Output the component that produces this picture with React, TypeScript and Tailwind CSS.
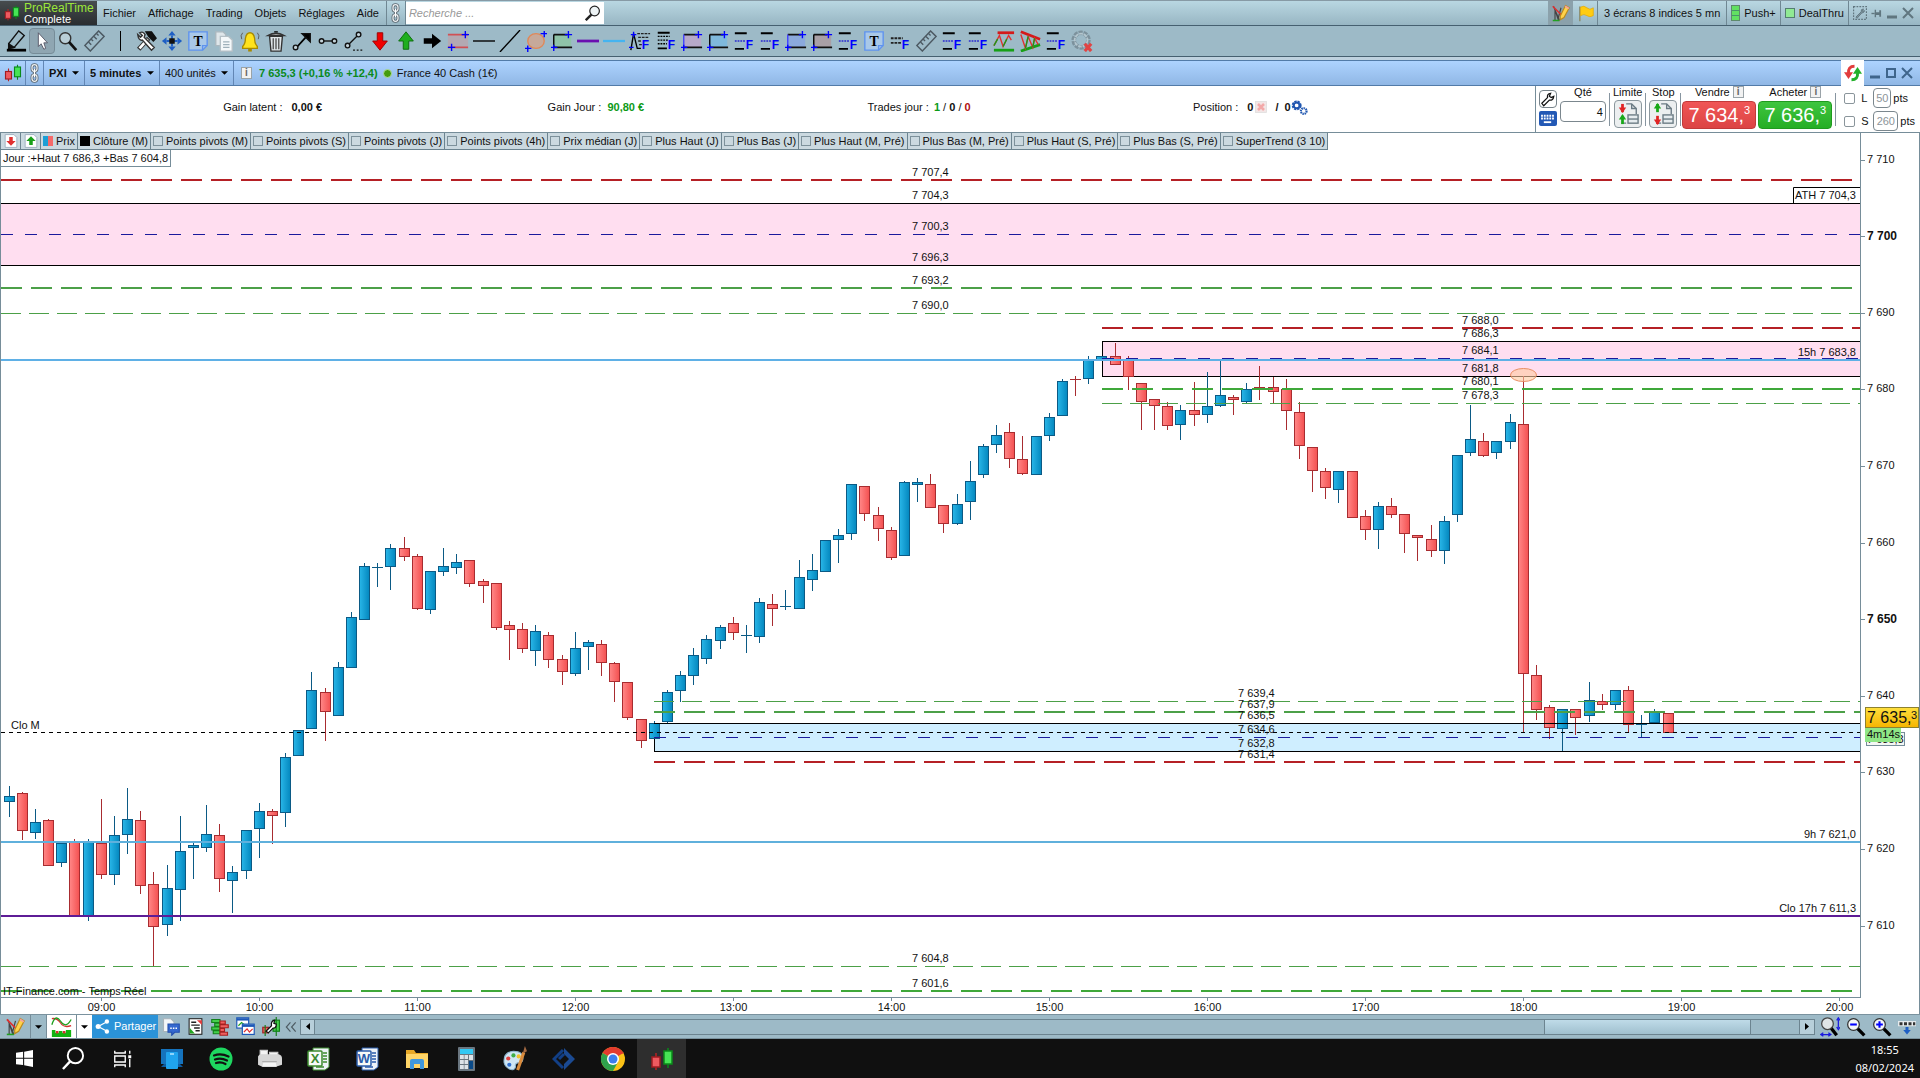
import type { ReactNode } from "react";

// y positions on the price scale: [up, high, body top, body bottom, low]
const candles: [number, number, number, number, number][] = [
  [1, 786, 796, 802, 817], [0, 792, 793, 831, 840], [1, 809, 822, 833, 839], [0, 819, 820, 866, 866],
  [1, 842, 843, 863, 867], [0, 839, 842, 916, 916], [1, 839, 842, 916, 921], [0, 799, 843, 875, 879],
  [1, 816, 835, 875, 885], [1, 788, 819, 835, 854], [0, 811, 820, 886, 894], [0, 872, 884, 927, 966],
  [1, 865, 888, 925, 936], [1, 816, 851, 890, 921], [1, 843, 845, 848, 879], [1, 805, 834, 848, 852],
  [0, 824, 835, 879, 892], [1, 866, 872, 881, 913], [1, 830, 830, 871, 879], [1, 803, 811, 829, 858],
  [0, 809, 811, 816, 844], [1, 753, 757, 813, 827], [1, 730, 730, 756, 756], [1, 672, 690, 729, 729],
  [0, 688, 692, 712, 741], [1, 662, 667, 716, 716], [1, 612, 617, 668, 668], [1, 563, 566, 620, 620],
  [1, 563, 567, 568, 587], [1, 544, 548, 567, 590], [0, 537, 548, 557, 561], [0, 554, 556, 609, 610],
  [1, 571, 571, 610, 614], [1, 548, 566, 572, 576], [1, 554, 562, 568, 574], [0, 560, 560, 584, 587],
  [0, 579, 581, 586, 603], [0, 583, 583, 628, 630], [0, 621, 625, 630, 660], [0, 623, 629, 649, 653],
  [1, 625, 631, 651, 666], [0, 632, 635, 660, 668], [0, 655, 659, 672, 685], [1, 632, 648, 674, 676],
  [1, 640, 642, 647, 670], [0, 640, 644, 663, 676], [0, 662, 663, 682, 702], [0, 682, 682, 718, 720],
  [0, 719, 719, 741, 748], [1, 721, 723, 739, 739], [1, 690, 692, 722, 723], [1, 671, 675, 691, 702],
  [1, 648, 655, 676, 685], [1, 635, 639, 659, 664], [1, 625, 627, 641, 649], [0, 617, 623, 633, 640],
  [1, 625, 635, 636, 653], [1, 598, 602, 637, 643], [0, 594, 604, 609, 626], [1, 590, 606, 607, 610],
  [1, 560, 577, 609, 609], [1, 554, 570, 580, 591], [1, 540, 540, 572, 572], [1, 529, 535, 540, 563],
  [1, 484, 484, 534, 540], [0, 486, 486, 514, 521], [0, 507, 515, 529, 541], [0, 527, 530, 558, 560],
  [1, 481, 482, 556, 556], [1, 478, 482, 485, 502], [0, 474, 484, 508, 508], [0, 505, 505, 524, 533],
  [1, 494, 504, 524, 525], [1, 461, 481, 502, 520], [1, 444, 446, 475, 478], [1, 425, 435, 445, 453],
  [0, 423, 432, 459, 468], [0, 436, 459, 474, 475], [1, 436, 436, 475, 475], [1, 413, 417, 436, 441],
  [1, 379, 381, 416, 416], [0, 376, 379, 380, 396], [1, 356, 360, 379, 384], [1, 356, 356, 360, 360],
  [0, 343, 356, 365, 365], [0, 356, 360, 377, 390], [0, 383, 383, 402, 430], [0, 399, 399, 406, 430],
  [0, 402, 406, 426, 430], [1, 405, 410, 425, 440], [0, 382, 410, 415, 426], [1, 372, 406, 415, 423],
  [1, 360, 395, 406, 407], [0, 395, 397, 400, 415], [1, 383, 389, 402, 403], [0, 366, 387, 388, 400],
  [0, 377, 387, 392, 403], [0, 379, 389, 411, 430], [0, 402, 412, 446, 459], [0, 447, 447, 471, 492],
  [0, 468, 471, 488, 499], [1, 471, 471, 490, 503], [0, 471, 471, 518, 518], [0, 510, 516, 530, 540],
  [1, 502, 506, 530, 549], [0, 498, 506, 515, 518], [0, 514, 514, 534, 553], [0, 535, 535, 538, 561],
  [0, 525, 539, 551, 557], [1, 516, 521, 551, 564], [1, 455, 455, 515, 522], [1, 405, 439, 453, 456],
  [0, 433, 441, 456, 457], [1, 441, 441, 453, 459], [1, 414, 422, 442, 449], [0, 376, 424, 674, 732],
  [0, 665, 675, 710, 720], [0, 705, 707, 728, 739], [1, 709, 709, 729, 751], [0, 709, 709, 718, 735],
  [1, 682, 700, 716, 722], [0, 694, 701, 705, 710], [1, 690, 690, 705, 710], [0, 686, 690, 725, 732],
  [1, 715, 724, 725, 737], [1, 709, 712, 723, 723], [0, 713, 713, 733, 733],
];

const RED = "#b52025";
const GREEN = "#4ca048";
const LIME = "#3fa83a";
const NAVY = "#1a1a9c";

// [x start, y, colour, width, dash]
const levels: [number, number, string, number, string][] = [
  [1, 180, RED, 2, "21 9"],
  [1, 234, NAVY, 1, "12 12"],
  [1, 288, GREEN, 2, "21 9"],
  [1, 313, GREEN, 1, "20 8"],
  [1102, 328, RED, 2, "21 9"],
  [0, 360, "#5fb0e6", 2, ""],
  [1102, 358, NAVY, 1, "12 12"],
  [1102, 389, LIME, 2, "21 9"],
  [1102, 403, GREEN, 1, "20 8"],
  [654, 701, GREEN, 1, "20 8"],
  [654, 712, GREEN, 2, "21 9"],
  [1, 732, "#000", 1, "4 4"],
  [654, 737, NAVY, 1, "12 12"],
  [654, 762, RED, 2, "21 9"],
  [0, 842, "#5fb0dc", 2, ""],
  [0, 916, "#5e1c96", 2, ""],
  [1, 966, GREEN, 1, "20 8"],
  [1, 991, LIME, 2, "21 9"],
];

const labels: [number, number, string][] = [
  [912, 176, "7 707,4"], [912, 199, "7 704,3"], [912, 230, "7 700,3"],
  [912, 261, "7 696,3"], [912, 284, "7 693,2"], [912, 309, "7 690,0"],
  [1462, 324, "7 688,0"], [1462, 337, "7 686,3"], [1462, 354, "7 684,1"],
  [1462, 372, "7 681,8"], [1462, 385, "7 680,1"], [1462, 399, "7 678,3"],
  [1238, 697, "7 639,4"], [1238, 708, "7 637,9"], [1238, 719, "7 636,5"],
  [1238, 733, "7 634,6"], [1238, 747, "7 632,8"], [1238, 758, "7 631,4"],
  [912, 962, "7 604,8"], [912, 987, "7 601,6"], [11, 729, "Clo M"],
];

const prices = ["7 710", "7 700", "7 690", "7 680", "7 670", "7 660", "7 650", "7 640", "7 630", "7 620", "7 610"];
const hours = ["09", "10", "11", "12", "13", "14", "15", "16", "17", "18", "19", "20"];

function Zone({ x, top, bottom, fill }: { x: number; top: number; bottom: number; fill: string }) {
  return (
    <g shapeRendering="crispEdges">
      <rect x={x} y={top} width={1870 - x} height={bottom - top + 1} fill="#000" />
      <rect x={x + 1} y={top + 1} width={1870 - x} height={bottom - top - 1} fill={fill} />
    </g>
  );
}

function Chart() {
  return (
    <svg viewBox="0 133 1920 881" className="block h-auto w-full" fontSize="11" fill="#111">
      <defs>
        <linearGradient id="up">
          <stop offset="0" stopColor="#27b4e6" />
          <stop offset="1" stopColor="#0589c0" />
        </linearGradient>
        <linearGradient id="down">
          <stop offset="0" stopColor="#ff8585" />
          <stop offset="1" stopColor="#f45353" />
        </linearGradient>
        <linearGradient id="gold" x2="0" y2="1">
          <stop offset="0" stopColor="#ffe03e" />
          <stop offset="1" stopColor="#f5b400" />
        </linearGradient>
        <clipPath id="plot">
          <rect x="0" y="133" width="1860" height="864" />
        </clipPath>
      </defs>
      <g clipPath="url(#plot)">
        <Zone x={-5} top={203} bottom={265} fill="#ffdef0" />
        <Zone x={1102} top={341} bottom={376} fill="#ffdef0" />
        <Zone x={654} top={723} bottom={751} fill="#cfeeff" />
        {candles.map(([up, high, top, bottom, low], i) => {
          const x = 9 + Math.floor((79 * i) / 6);
          const edge = up ? "#0b5a85" : "#a82c30";
          return (
            <g key={i} shapeRendering="crispEdges">
              <rect x={x} y={high} width="1" height={low - high} fill={edge} />
              <rect x={x - 5} y={top} width="11" height={bottom - top} fill={edge} />
              {bottom - top > 2 && (
                <rect x={x - 4} y={top + 1} width="9" height={bottom - top - 2} fill={up ? "url(#up)" : "url(#down)"} />
              )}
            </g>
          );
        })}
        {[723, 751].map((y) => (
          <rect key={y} x="654" y={y} width="1206" height="1" fill="#000" />
        ))}
        {levels.map(([x, y, color, width, dash], i) => (
          <line
            key={i}
            x1={x}
            x2="1860"
            y1={width === 1 ? y + 0.5 : y}
            y2={width === 1 ? y + 0.5 : y}
            stroke={color}
            strokeWidth={width}
            strokeDasharray={dash || undefined}
            shapeRendering="crispEdges"
          />
        ))}
        <ellipse cx="1523.5" cy="375" rx="13" ry="6.5" fill="#ffc9a0" fillOpacity=".6" stroke="#e98f63" />
        <path d="M1793.500 203V187.500H1862V203" fill="#fff" stroke="#000" />
      </g>
      {labels.map(([x, y, text]) => (
        <text key={text} x={x} y={y}>{text}</text>
      ))}
      <g textAnchor="end">
        <text x="1856" y="199">ATH 7 704,3</text>
        <text x="1856" y="356">15h 7 683,8</text>
        <text x="1856" y="838">9h 7 621,0</text>
        <text x="1856" y="912">Clo 17h 7 611,3</text>
      </g>
      <text x="3" y="995">IT-Finance.com - Temps Réel</text>

      <path d="M.5 133V1014M1860.500 133V997.500M0 997.500H1861M1919.500 133V1014" fill="none" stroke="#768d99" />
      {prices.map((p, i) => {
        const y = Math.floor(160 + i * 76.6);
        const round = i === 1 || i === 6;
        return (
          <g key={p}>
            <rect x="1861" y={y} width="4" height="1" fill="#768d99" />
            <text x="1867" y={y + (round ? 4 : 3)} fontSize={round ? 12 : 11} fontWeight={round ? 700 : 400}>{p}</text>
          </g>
        );
      })}
      {hours.map((h, i) => (
        <g key={h}>
          <rect x={101 + i * 158} y="998" width="1" height="3" fill="#768d99" />
          <text x={101.5 + i * 158} y="1011" textAnchor="middle">{h}:00</text>
        </g>
      ))}

      <rect x="1866.500" y="732.500" width="38" height="13" fill="#f4f7f4" stroke="#768d99" />
      <text x="1867" y="743">7 635,3</text>
      <rect x="1865" y="728" width="36" height="14" fill="#8fe686" />
      <text x="1867" y="738">4m14s</text>
      <rect x="1865.500" y="707.500" width="53" height="20" fill="url(#gold)" stroke="#8d8130" />
      <text x="1867" y="723" fontSize="16">7 635,</text>
      <text x="1911" y="719">3</text>
    </svg>
  );
}

function Svg({ size = 22, children }: { size?: number; children: ReactNode }) {
  return (
    <svg viewBox="0 0 24 24" width={size} height={size} fill="none" stroke="#111" strokeWidth="1.500" className="shrink-0">
      {children}
    </svg>
  );
}

function Fib({ children }: { children?: ReactNode }) {
  return (
    <Svg>
      {children ?? (
        <>
          <path d="M2 3.500H15M2 20.500H12" stroke="#000" strokeWidth="2" />
          <path d="M2 12H14" stroke="#2a2ad0" strokeDasharray="2 1" />
        </>
      )}
      <text x="14" y="21" fontSize="13" fontWeight="700" fill="#00f" stroke="none">F</text>
    </Svg>
  );
}

function Box({ fill, left = "#000" }: { fill: string; left?: string }) {
  return (
    <Svg>
      <rect x="3" y="5" width="19" height="14" fill={fill} stroke="none" />
      <path d="M3 5H18M3 19H23" stroke="#111" strokeWidth="2" />
      <path d="M3 5V19" stroke={left} />
      <path d="M19 1V9M15 5H23M0 19H7M3 16V23" stroke="#00f" />
    </Svg>
  );
}

function TextTool() {
  return (
    <Svg>
      <path d="M2 2H22V17L17 22H2Z" fill="#a9c8e8" stroke="#5f93ee" />
      <path d="M22 17H17V22" stroke="#5f93ee" />
      <text x="12" y="17" textAnchor="middle" fontSize="15" fontWeight="700" fill="#000" stroke="none" fontFamily="Liberation Serif, serif">T</text>
    </Svg>
  );
}

function Ruler() {
  return (
    <Svg>
      <path d="M2 17L17 1L23 7L8 23Z" stroke="#4c5962" />
      <path d="M6 13L9 16M9 10L11 12M12 7L15 10M15 4L17 6" stroke="#4c5962" />
    </Svg>
  );
}

function DrawChart({ size = 22 }: { size?: number }) {
  return (
    <Svg size={size}>
      <path d="M2 3L10 22M4 22V8L8 20L12 5" stroke="#444" />
      <path d="M1 3L14 16" stroke="#e03030" strokeWidth="2" />
      <path d="M1 22H10" stroke="#22a022" strokeWidth="2" />
      <path d="M11 16L18 2L23 5L16 18L11 21Z" fill="#ffd24a" stroke="#b98a1e" />
      <path d="M18 2L23 5L22 7L17 4Z" fill="#f2a0a0" stroke="none" />
    </Svg>
  );
}

function Candles({ size = 22 }: { size?: number }) {
  return (
    <Svg size={size}>
      <path d="M6 6V23" stroke="#b22" />
      <rect x="2" y="10" width="8" height="10" fill="#ee5a60" stroke="#a01c22" />
      <path d="M18 1V21" stroke="#0a8a1a" />
      <rect x="14" y="4" width="8" height="13" fill="#47e455" stroke="#0a8a1a" />
    </Svg>
  );
}

function Chain() {
  return (
    <svg viewBox="0 0 12 24" width="11" height="20" fill="none" stroke="#5b6770" strokeWidth="3.500">
      <rect x="3" y="2" width="6" height="8" rx="3" />
      <rect x="3" y="14" width="6" height="8" rx="3" />
      <path d="M6 7V17" />
      <rect x="3" y="2" width="6" height="8" rx="3" stroke="#eef1f3" strokeWidth="1.500" />
      <rect x="3" y="14" width="6" height="8" rx="3" stroke="#eef1f3" strokeWidth="1.500" />
      <path d="M6 7V17" stroke="#fff" strokeWidth="1.500" />
    </svg>
  );
}

function Lens({ sign }: { sign: string }) {
  return (
    <Svg size={20}>
      <path d="M14 14L22 22" stroke="#000" strokeWidth="4" />
      <circle cx="9" cy="9" r="7" fill="#f3f6f7" stroke="#333" />
      <path d={sign} stroke="#00f" strokeWidth="2.500" />
    </Svg>
  );
}

const tools: [string, ReactNode][] = [
  ["Crayon", <Svg><path d="M4 15L15 1L21 6L10 19L4 20Z" /><path d="M4 15L10 19L4 20Z" fill="#111" /><path d="M2 22H23" stroke="#000" strokeWidth="3" /></Svg>],
  ["Sélection", <Svg><path d="M8 3V18L11 15L14 21L16 20L14 14H18Z" fill="#fff" stroke="#556" strokeWidth="1" /></Svg>],
  ["Loupe", <Svg><circle cx="9" cy="9" r="6" fill="#b9ced7" stroke="#333" /><path d="M13 13L21 22" stroke="#111" strokeWidth="3" /></Svg>],
  ["Règle", <Ruler />],
  ["", null],
  ["Outils", <Svg><path d="M4 21L15 9" stroke="#333" strokeWidth="5" /><path d="M5 20L14 10" stroke="#fff" strokeWidth="3" /><path d="M3 5L6 8L8 6L5 3Q9 1 11 5L10 8L21 19L18 22L8 11Q4 12 3 5Z" fill="#fff" stroke="#333" /><path d="M12 2L18 2L23 9L20 12L15 7Z" fill="#111" /></Svg>],
  ["Déplacer", <Svg><path d="M12 1L16 6H8ZM12 23L8 18H16ZM1 12L6 8V16ZM23 12L18 16V8Z" fill="#1f5fc4" stroke="none" /><path d="M12 6V18M6 12H18" stroke="#1f5fc4" strokeWidth="2" /><path d="M9 9H15V15H9Z" fill="#111" stroke="none" /></Svg>],
  ["Texte", <TextTool />],
  ["Copier", <Svg><path d="M3 2H11L14 5V17H3Z" fill="#dfe6ea" stroke="#aab7be" /><path d="M8 7H17L21 11V23H8Z" fill="#f5f8fa" stroke="#b5c0c6" /><path d="M11 13H18M11 16H18M11 19H18" stroke="#9fb0ba" /></Svg>],
  ["Alerte", <Svg><path d="M4 18Q7 15 7 9Q8 3 12 3Q16 3 17 9Q17 15 20 18V20H4Z" fill="#ffe21c" stroke="#a88a00" /><path d="M10 22H14" stroke="#a88a00" strokeWidth="3" /><path d="M4 3Q1 6 3 10M20 3Q23 6 21 10" stroke="#555" strokeWidth="1" /></Svg>],
  ["Supprimer", <Svg><path d="M5 7H19L17.500 23H6.500Z" fill="#dfe5e8" stroke="#333" /><path d="M9 9V21M12 9V21M15 9V21" stroke="#555" /><path d="M3 6Q12 1 21 6Z" fill="#ccc" stroke="#333" /><path d="M10 2H14" /></Svg>],
  ["Flèche", <Svg><path d="M7 18L17 7" stroke="#000" strokeWidth="2" /><path d="M12 4H21V13Z" fill="#000" /><circle cx="5" cy="19" r="2.500" fill="#c3d3da" /></Svg>],
  ["Segment", <Svg><path d="M6 12H18" /><circle cx="5" cy="12" r="2.500" fill="#c3d3da" /><circle cx="19" cy="12" r="2.500" fill="#c3d3da" /></Svg>],
  ["Segments", <Svg><path d="M5 17L17 5" /><circle cx="5" cy="17" r="2.500" fill="#c3d3da" /><circle cx="17" cy="5" r="2.500" fill="#c3d3da" /><path d="M11 22H22" strokeDasharray="2 2" /></Svg>],
  ["Baisse", <Svg><path d="M9 3H15V12H20L12 22L4 12H9Z" fill="#f00000" stroke="#900" strokeWidth="1" /></Svg>],
  ["Hausse", <Svg><path d="M9 21H15V12H20L12 2L4 12H9Z" fill="#1fae1f" stroke="#0a6a0a" strokeWidth="1" /></Svg>],
  ["Droite", <Svg><path d="M3 9H12V4L22 12L12 20V15H3Z" fill="#000" stroke="none" /></Svg>],
  ["Canal", <Svg><path d="M1 5H23V19H1Z" fill="#b3a9b2" stroke="none" /><path d="M1 5H23M1 19H23" stroke="#d05055" strokeWidth="2" /><path d="M20 1V9M16 5H24M5 15V23M1 19H9" stroke="#00f" /></Svg>],
  ["Horizontale", <Svg><path d="M0 12H24" stroke="#000" /></Svg>],
  ["Oblique", <Svg><path d="M1 24L23 0" stroke="#000" /></Svg>],
  ["Ellipse", <Svg><ellipse cx="12" cy="12" rx="9" ry="8" fill="#c6a99a" stroke="#e08858" /><path d="M21 1V8M17 4H24M3 17V24M0 20H7" stroke="#00f" /></Svg>],
  ["Zone verte", <Box fill="#8fc3a8" />],
  ["Ligne violette", <Svg><path d="M0 12H24" stroke="#6a10b0" strokeWidth="3" /></Svg>],
  ["Ligne bleue", <Svg><path d="M0 12H24" stroke="#45b4f0" strokeWidth="2.500" /></Svg>],
  ["Fibonacci A", <Fib><path d="M2 22L5 4L9 20H13" stroke="#000" /><path d="M2 5H8M5 2V8M0 19H5" stroke="#00f" /><path d="M9 4H23M10 8H21M10 12H14M11 16H14" stroke="#222" strokeDasharray="3 1" /></Fib>],
  ["Fibonacci B", <Fib><path d="M3 3H16M3 20H13" stroke="#000" strokeWidth="2" /><path d="M3 7H16M3 11H14M3 15H13" stroke="#000" strokeDasharray="2 1" /></Fib>],
  ["Zone mauve", <Box fill="#b7a9c9" left="#4040ff" />],
  ["Zone cyan", <Box fill="#7fb9dc" />],
  ["Niveaux 1", <Fib />],
  ["Niveaux 2", <Fib />],
  ["Zone bleue", <Box fill="#8ba9dc" left="#4040ff" />],
  ["Zone brune", <Box fill="#a9a0a6" />],
  ["Niveaux 3", <Fib />],
  ["Note", <TextTool />],
  ["Niveaux 4", <Fib><path d="M2 9H15M2 14H13" stroke="#222" strokeWidth="2" strokeDasharray="3 1" /></Fib>],
  ["Mesure", <Ruler />],
  ["Niveaux 5", <Fib />],
  ["Niveaux 6", <Fib />],
  ["Supports", <Svg><path d="M5 3H23" stroke="#d41a1a" strokeWidth="3" /><path d="M1 22H23" stroke="#16a016" strokeWidth="3" /><path d="M1 17L7 6L11 18L17 6L20 11" stroke="#e03030" /><path d="M1 17L5 10M11 18L15 10" stroke="#1a9a1a" /></Svg>],
  ["Triangle", <Svg><path d="M2 2L23 10" stroke="#d41a1a" strokeWidth="3" /><path d="M2 23L23 16" stroke="#16a016" strokeWidth="3" /><path d="M2 5L7 20L10 7L15 19L17 9L21 16" stroke="#e03030" /><path d="M7 20L10 7M15 19L17 9" stroke="#1a9a1a" /></Svg>],
  ["Niveaux 7", <Fib />],
  ["Aimant", <Svg><circle cx="11" cy="11" r="8" stroke="#7c919c" strokeWidth="5" strokeDasharray="4 1" /><circle cx="11" cy="11" r="7" stroke="#b4c6ce" strokeWidth="2" strokeDasharray="4 1" /><path d="M15 15L22 23M22 15L15 23" stroke="#e04444" strokeWidth="3.500" /></Svg>],
];

function WindowIcons({ color, maximize }: { color: string; maximize?: boolean }) {
  return maximize ? (
    <svg viewBox="0 0 44 14" width="44" height="14" fill="none" stroke={color} strokeWidth="2">
      <path d="M0 11H10" strokeWidth="3" />
      <path d="M17 3H25V11H17Z" />
      <path d="M32 2L42 12M42 2L32 12" />
    </svg>
  ) : (
    <svg viewBox="0 0 30 14" width="30" height="14" fill="none" stroke={color} strokeWidth="2">
      <path d="M1 11H11" strokeWidth="3" />
      <path d="M17 2L27 12M27 2L17 12" />
    </svg>
  );
}

function MenuBar() {
  return (
    <header className="flex h-[25px] items-stretch border-t border-t-[#879aa5] bg-linear-to-b from-[#b9d7e2] to-[#98b6c3]">
      <div className="flex w-[97px] items-center gap-1 bg-linear-to-b from-[#474c4e] to-[#292d30] pl-1">
        <Candles size={16} />
        <div>
          <div className="text-xs leading-3 text-[#9be83a]">ProRealTime</div>
          <div className="leading-[11px] text-white">Complete</div>
        </div>
      </div>
      <nav className="flex items-center gap-3 pr-[7px] pl-[6px]">
        {["Fichier", "Affichage", "Trading", "Objets", "Réglages", "Aide"].map((item) => (
          <button key={item} type="button">{item}</button>
        ))}
      </nav>
      <div className="flex w-5 items-center justify-center border-x border-[#6f8793]"><Chain /></div>
      <label className="my-px flex w-[198px] items-center bg-white px-[3px]">
        <input aria-label="Recherche" placeholder="Recherche ..." className="min-w-0 flex-1 italic outline-none placeholder:text-[#999]" />
        <svg viewBox="0 0 20 20" width="16" height="16" fill="none" stroke="#222" strokeWidth="1.500">
          <circle cx="12" cy="7.500" r="6" fill="#eef4f6" />
          <path d="M8 12L1 19" strokeWidth="3" />
        </svg>
      </label>
      <div className="ml-auto flex items-stretch">
        <button type="button" aria-label="Dessin" className="flex w-[25px] items-center justify-center bg-[#8ba1ab]"><DrawChart size={18} /></button>
        <button type="button" aria-label="Drapeau" className="flex w-[25px] items-center justify-center border-r border-[#6f8793]">
          <Svg size={17}><path d="M4 2V23" stroke="#8a8a6a" strokeWidth="2" /><path d="M5 3Q10 0 14 4T23 4V15Q18 18 14 15T5 15Z" fill="#ffcc12" stroke="#e3a800" strokeWidth="1" /></Svg>
        </button>
        <button type="button" className="border-r border-[#6f8793] px-[6px]">3 écrans 8 indices 5 mn</button>
        <button type="button" className="flex items-center gap-1 border-r border-[#6f8793] px-1">
          <span className="h-4 w-[9px] border border-[#5e8a6c] bg-[repeating-linear-gradient(#62e062_0_4px,#47956a_4px_5px)]" />
          Push+
        </button>
        <button type="button" className="flex items-center gap-1 border-r border-[#6f8793] px-1">
          <span className="h-[10px] w-[10px] border border-[#547f70] bg-[#90ea94]" />
          DealThru
        </button>
        <div className="flex items-center gap-1 pr-1 pl-1">
          <Svg size={14}><rect x="1" y="1" width="22" height="22" stroke="#60767f" strokeDasharray="3 2" strokeWidth="2" /><path d="M5 19L14 10Q13 5 18 5L16 9L20 8Q19 12 15 12L7 21Z" fill="#7d949e" stroke="#60767f" /></Svg>
          <Svg size={11}><path d="M1 12H8" stroke="#60767f" strokeWidth="3" /><path d="M8 4H11V9H18V5H22V19H18V15H11V20H8Z" fill="#60767f" stroke="none" /></Svg>
          <WindowIcons color="#60767f" />
        </div>
      </div>
    </header>
  );
}

function ToolBar() {
  return (
    <div className="flex h-8 items-center border-y border-[#466070] bg-[#9dbac7] px-[3px]">
      {tools.map(([name, icon], i) =>
        icon ? (
          <button
            key={name}
            type="button"
            aria-label={name}
            className={i === 1 ? "flex h-[26px] w-[26px] items-center justify-center rounded-sm border border-[#768c98] bg-[#8fa6b2]" : "flex h-[26px] w-[26px] items-center justify-center"}
          >
            {icon}
          </button>
        ) : (
          <div key="sep" className="flex w-[26px] justify-center"><div className="h-5 w-px bg-black" /></div>
        )
      )}
    </div>
  );
}

function Caret() {
  return <svg viewBox="0 0 8 4" width="7" height="4" className="pointer-events-none -ml-[12px]"><path d="M0 0H8L4 4Z" /></svg>;
}

function Picker({ label, value, className }: { label: string; value: string; className: string }) {
  return (
    <div className="flex items-center border-r border-[#6286b4] px-[5px]">
      <select aria-label={label} className={`appearance-none bg-transparent pr-[17px] outline-none ${className}`}>
        <option>{value}</option>
      </select>
      <Caret />
    </div>
  );
}

function Info() {
  return <span className="inline-flex h-3 w-[11px] items-center justify-center border border-[#9aa3a8] bg-[#f2f2f2] text-[10px] leading-none font-bold text-[#666]">i</span>;
}

function TitleBar() {
  return (
    <div className="flex h-[29px] flex-col bg-[#bfd2df]">
      <div className="mt-[3px] flex h-[26px] items-stretch border-y border-[#527ba8] bg-linear-to-b from-[#add3ff] to-[#90b7e5]">
        <div className="flex w-[26px] items-center justify-center border-r border-[#6286b4]"><Candles size={18} /></div>
        <div className="flex w-[18px] items-center justify-center border-r border-[#6286b4]"><Chain /></div>
        <Picker label="Valeur" value="PXI" className="font-bold" />
        <Picker label="Unité de temps" value="5 minutes" className="font-bold" />
        <Picker label="Historique" value="400 unités" className="" />
        <div className="flex items-center gap-[5px] pl-[7px]">
          <Info />
          <span className="pl-[2px] font-bold text-[#0a8a1c]">7 635,3 (+0,16 % +12,4)</span>
          <span className="h-[9px] w-[9px] rounded-full border border-[#b4dca0] bg-[#459c0c]" />
          <span>France 40 Cash (1€)</span>
        </div>
        <div className="ml-auto flex items-center gap-[6px] pr-[6px]">
          <button type="button" aria-label="Synchroniser" className="flex h-[26px] w-[23px] items-center justify-center bg-white">
            <Svg size={18}>
              <path d="M14 3Q5 3 6 13" stroke="#e23c3c" strokeWidth="4" /><path d="M0 11H12L6 20Z" fill="#e23c3c" stroke="none" />
              <path d="M10 21Q19 21 18 12" stroke="#22b02a" strokeWidth="4" /><path d="M12 13H24L18 4Z" fill="#22b02a" stroke="none" />
            </Svg>
          </button>
          <WindowIcons color="#3f658c" maximize />
        </div>
      </div>
    </div>
  );
}

function OrderType({ label, first, second }: { label: string; first: string; second: string }) {
  return (
    <div className="flex h-full flex-col items-center gap-[2px] px-[3px]">
      <span className="leading-3">{label}</span>
      <button type="button" aria-label={label} className="flex h-7 w-7 items-center justify-center rounded-sm border border-[#8b979d] bg-[#eceff0]">
        <Svg>
          <path d="M10 1H16L21 6V12M10 22H5" stroke="#6b7b84" />
          <path d="M16 1V6H21" stroke="#6b7b84" />
          <rect x="12" y="13" width="11" height="9" fill="#e6ecef" stroke="#6b7b84" /><path d="M12 17.500H23" stroke="#6b7b84" />
          <path d="M6 1V10" stroke={first} strokeWidth="3" /><path d={label === "Stop" ? "M2 6H10L6 0Z" : "M2 5H10L6 11Z"} fill={first} stroke="none" />
          <path d="M6 14V23" stroke={second} strokeWidth="3" /><path d={label === "Stop" ? "M2 18H10L6 24Z" : "M2 18H10L6 12Z"} fill={second} stroke="none" />
        </Svg>
      </button>
    </div>
  );
}

function Quote({ side, price, className }: { side: string; price: string; className: string }) {
  return (
    <div className="flex w-[76px] flex-col items-center gap-[3px] px-px">
      <span className="flex items-center gap-[3px] leading-3">{side} <Info /></span>
      <button type="button" className={`flex h-7 w-full items-center justify-center rounded-sm border text-xl leading-none text-white ${className}`}>
        {price}
        <sup className="text-[11px]">3</sup>
      </button>
    </div>
  );
}

function Guard({ name, value, className }: { name: string; value: string; className: string }) {
  return (
    <div className="flex items-center gap-[5px]">
      <label className="flex items-center gap-[6px]">
        <input type="checkbox" className="h-[11px] w-[11px] appearance-none rounded-xs border border-[#8a959b] bg-white" />
        <span className="w-[7px]">{name}</span>
      </label>
      <input aria-label={`${name} points`} defaultValue={value} className={`h-5 rounded-sm border border-[#7b878e] text-center text-[#8c9499] ${className}`} />
      <span className="-ml-[3px]">pts</span>
    </div>
  );
}

function Rule() {
  return <div className="mt-[7px] h-[33px] w-px bg-[#8795a0]" />;
}

function AccountBar() {
  return (
    <section className="flex h-[47px] border-b border-[#768d99]">
      <div className="grid flex-1 grid-cols-4 items-center justify-items-center pr-[131px] pb-1 pl-[111px]">
        <p>Gain latent : <b className="pl-[6px]">0,00 €</b></p>
        <p>Gain Jour : <b className="pl-[3px] text-[#0d9a18]">90,80 €</b></p>
        <p>Trades jour : <b className="pl-[2px] text-[#0d9a18]">1</b> / <b>0</b> / <b className="text-[#b01010]">0</b></p>
        <div className="flex items-center pl-4">
          Position : <b className="pl-[9px] pr-[2px]">0</b>
          <Svg size={12}><rect x="1" y="1" width="22" height="22" fill="#f3e6e6" stroke="#ddd" /><path d="M6 6L18 18M18 6L6 18" stroke="#f3a9a9" strokeWidth="5" /></Svg>
          <b className="pl-[8px]">/ &nbsp;0</b>
          <Svg size={17}><circle cx="8" cy="9" r="5" stroke="#1f56b0" strokeWidth="4" strokeDasharray="3 1" /><circle cx="8" cy="9" r="4" stroke="#1f56b0" strokeWidth="2.500" /><circle cx="18" cy="17" r="4" stroke="#1f56b0" strokeWidth="3" strokeDasharray="2 1" /></Svg>
        </div>
      </div>
      <div className="flex items-start border-l border-[#768d99]">
        <div className="flex flex-col gap-[3px] px-[3px] pt-1">
          <button type="button" aria-label="Options" className="flex h-[18px] w-[18px] items-center justify-center rounded-sm border border-[#77838a]">
            <Svg size={15}><path d="M3 18L12 9Q11 3 17 2L15 7L18 9L22 7Q21 14 15 13L6 22Z" stroke="#111" strokeWidth="2" /></Svg>
          </button>
          <button type="button" aria-label="Clavier" className="flex h-[15px] w-[18px] items-center justify-center rounded-xs bg-[#2359b5]">
            <svg viewBox="0 0 16 12" width="15" height="11" stroke="#fff" strokeWidth="2"><path d="M1 3H15M1 6H15" strokeDasharray="2 1" /><path d="M4 10H12" /></svg>
          </button>
        </div>
        <label className="mr-[3px] flex w-[46px] flex-col items-center gap-[3px]">
          <span className="leading-3">Qté</span>
          <input defaultValue="4" className="h-[21px] w-full rounded-sm border border-[#7b878e] pr-[2px] text-right" />
        </label>
        <Rule />
        <OrderType label="Limite" first="#e02424" second="#18a818" />
        <Rule />
        <OrderType label="Stop" first="#18a818" second="#e02424" />
        <Rule />
        <Quote side="Vendre" price="7 634," className="border-[#c23a3a] bg-linear-to-b from-[#f05656] to-[#dc4444]" />
        <Quote side="Acheter" price="7 636," className="border-[#1f9a1f] bg-linear-to-b from-[#3ec53e] to-[#25ae25]" />
        <div className="w-[2px]" />
        <Rule />
        <div className="flex flex-col gap-[3px] pr-[5px] pl-2 pt-[2px]">
          <Guard name="L" value="50" className="w-[18px]" />
          <Guard name="S" value="260" className="w-[25px]" />
        </div>
      </div>
    </section>
  );
}

const indicators = [
  "Points pivots (M)", "Points pivots (S)", "Points pivots (J)", "Points pivots (4h)", "Prix médian (J)",
  "Plus Haut (J)", "Plus Bas (J)", "Plus Haut (M, Pré)", "Plus Bas (M, Pré)", "Plus Haut (S, Pré)",
  "Plus Bas (S, Pré)", "SuperTrend (3 10)",
];

function Indicators() {
  return (
    <div className="absolute top-0 left-0">
      <div className="flex h-[17px] items-stretch divide-x divide-[#6c8490] border-r border-b border-l border-[#6c8490] bg-[#cbd9e0]">
        {["M9 5H15V12H20L12 20L4 12H9Z", "M9 19H15V12H20L12 4L4 12H9Z"].map((d, i) => (
          <button key={d} type="button" aria-label={i ? "Monter" : "Descendre"} className="flex w-5 items-center justify-center">
            <Svg size={14}><path d="M2 1H17L22 6V23H2Z" fill="#fff" stroke="#9ab" /><path d={d} fill={i ? "#1aa01a" : "#e03030"} stroke="none" /></Svg>
          </button>
        ))}
        <span className="flex items-center gap-[3px] px-[2px]"><i className="h-[10px] w-[10px] bg-linear-to-r from-[#1c9fd6] from-50% to-[#f56a6a] to-50%" />Prix</span>
        <span className="flex items-center gap-[3px] px-[2px]"><i className="h-[10px] w-[10px] bg-black" />Clôture (M)</span>
        {indicators.map((name) => (
          <label key={name} className="flex items-center gap-[3px] px-[2px] whitespace-nowrap">
            <input type="checkbox" className="h-[10px] w-[10px] appearance-none border border-[#7d919b]" />
            {name}
          </label>
        ))}
      </div>
      <div className="flex h-[17px] w-fit items-center border-r border-b border-l border-[#768d99] bg-white px-[2px] whitespace-nowrap">
        Jour :+Haut 7 686,3 +Bas 7 604,8
      </div>
    </div>
  );
}

const shortcuts: [string, ReactNode][] = [
  ["Discussion", <Svg size={18}><path d="M2 1H12L16 5V18H2Z" fill="#f4f7f9" stroke="#a9b4ba" /><path d="M8 8H23V19H17L13 23V19H8Z" fill="#3568cf" stroke="#2450ae" /><path d="M11 13.500H20" stroke="#fff" strokeWidth="2" strokeDasharray="2 1.500" /></Svg>],
  ["Rapport", <Svg size={17}><rect x="3" y="1" width="18" height="22" fill="#fff" stroke="#222" /><path d="M6 6H13M6 10H18M10 14H18M12 18H18" stroke="#222" strokeWidth="2" /><path d="M14 3H21V10Z" fill="#e53a3a" stroke="none" /><path d="M4 14L11 22H4Z" fill="#22a522" stroke="none" /></Svg>],
  ["Carnet", <Svg size={18}><path d="M1 2H12V6H1ZM5 7H12V11H5ZM1 12H12V16H1ZM3 17H12V21H3Z" fill="#45d04c" stroke="#13801a" /><path d="M12 4H19V8H12ZM12 9H23V13H12ZM12 14H18V18H12ZM12 19H22V23H12Z" fill="#ef5f5f" stroke="#a52020" /></Svg>],
  ["Fenêtres", <Svg size={19}><rect x="1" y="1" width="15" height="13" fill="#fff" stroke="#1d58b8" /><path d="M1 3H16" stroke="#1d58b8" strokeWidth="3" /><path d="M3 11L7 7L11 10" stroke="#22a522" /><rect x="8" y="9" width="15" height="13" fill="#fff" stroke="#1d58b8" /><path d="M8 11H23" stroke="#1d58b8" strokeWidth="3" /><path d="M10 19L14 15L17 19L21 15" stroke="#e03030" /></Svg>],
  ["Réglages du graphique", <Svg size={19}><rect x="1" y="13" width="7" height="7" fill="#ef5f5f" stroke="#a52020" /><rect x="14" y="4" width="8" height="14" fill="#45d04c" stroke="#13801a" /><path d="M18 0V24M4 10V24" stroke="#13801a" /><path d="M5 18L12 11Q11 5 16 4L15 8L18 9Q18 14 14 14L8 20Z" fill="#fff" stroke="#111" /></Svg>],
];

function BottomBar() {
  return (
    <div className="flex h-[25px] items-center border-y border-[#7a929e] bg-[#9dbac7] pl-px text-xs">
      <button type="button" aria-label="Dessiner" className="flex h-full w-[30px] items-center justify-center border-r border-[#768d99]"><DrawChart size={19} /></button>
      <button type="button" aria-label="Options de dessin" className="flex h-full w-4 items-center justify-center border-r border-[#768d99] pl-3"><Caret /></button>
      <button type="button" aria-label="Indicateurs" className="flex h-full w-[30px] items-center justify-center border-r border-[#768d99] bg-white">
        <Svg size={21}><path d="M1 3Q7 2 11 8T23 11" stroke="#d63030" /><path d="M1 10Q5 -3 11 6T23 4" stroke="#1fa01f" /><path d="M1 24V16H5V19H9V17H13V19H17V16H23V24Z" fill="#12b312" stroke="none" /><path d="M7 20V17M15 20V17" stroke="#d63030" strokeWidth="3" /></Svg>
      </button>
      <button type="button" aria-label="Choix des indicateurs" className="flex h-full w-[15px] items-center justify-center bg-white pl-3"><Caret /></button>
      <button type="button" className="flex h-full w-[66px] items-center gap-1 bg-[#2b93d8] pl-[3px] text-[11px] text-white">
        <Svg size={15}><path d="M20 4L5 12L20 20" stroke="#fff" strokeWidth="2" /><circle cx="19" cy="4" r="3.500" fill="#fff" stroke="none" /><circle cx="5" cy="12" r="4" fill="#fff" stroke="none" /><circle cx="19" cy="20" r="3.500" fill="#fff" stroke="none" /></Svg>
        Partager
      </button>
      <div className="flex w-[124px] justify-between pr-px pl-1">
        {shortcuts.map(([name, icon]) => (
          <button key={name} type="button" aria-label={name}>{icon}</button>
        ))}
      </div>
      <button type="button" aria-label="Réduire" className="flex w-[18px] justify-center"><Svg size={14}><path d="M11 4L4 12L11 20M20 4L13 12L20 20" stroke="#4d5b63" strokeWidth="2" /></Svg></button>
      <div className="flex h-4 flex-1 items-stretch border border-[#6c8490]">
        <button type="button" aria-label="Défiler à gauche" className="flex w-[14px] items-center justify-center border-r border-[#6c8490] bg-[#b7cfda]"><svg width="4" height="7"><path d="M4 0V7L0 3.500Z" /></svg></button>
        <div className="flex flex-1 justify-end pr-12"><div className="w-[14.4%] border-x border-[#6c8490] bg-linear-to-b from-[#bfdbe8] to-[#a0c0cf]" /></div>
        <button type="button" aria-label="Défiler à droite" className="flex w-[15px] items-center justify-center border-l border-[#6c8490] bg-[#b7cfda]"><svg width="4" height="7"><path d="M0 0V7L4 3.500Z" /></svg></button>
      </div>
      <div className="flex items-center gap-[6px] pr-1 pl-[5px]">
        <button type="button" aria-label="Ajuster"><Svg size={20}><path d="M13 13L20 22" stroke="#000" strokeWidth="4" /><circle cx="9" cy="8" r="7" fill="#dfe4e6" stroke="#444" /><path d="M22 3V13M20 4L22 1L24 4M20 12L22 15L24 12M2 21H12M4 19L1 21L4 23M10 19L13 21L10 23" stroke="#1a1ae0" /></Svg></button>
        <button type="button" aria-label="Zoom arrière"><Lens sign="M5 9H13" /></button>
        <button type="button" aria-label="Zoom avant"><Lens sign="M5 9H13M9 5V13" /></button>
        <button type="button" aria-label="Clavier virtuel"><Svg size={18}><rect x="0" y="4" width="24" height="7" fill="#e5eaec" stroke="none" /><path d="M2 7.500H23" stroke="#333" strokeWidth="4" strokeDasharray="4 2" /><path d="M12 12V17" stroke="#1f5fc4" strokeWidth="4" /><path d="M7 16H17L12 22Z" fill="#1f5fc4" stroke="none" /></Svg></button>
      </div>
    </div>
  );
}

function Doc({ letter, color }: { letter: string; color: string }) {
  return (
    <Svg size={24}>
      <path d="M6 1H22V20L18 23H6Z" fill="#eef3f8" stroke={color} strokeWidth="1" />
      <path d="M16 6H20M16 9H20M16 12H20M16 15H20M9 20H17" stroke={color} />
      <rect x="1" y="4" width="14" height="15" rx="1" fill="#f7faf7" stroke={color} />
      <text x="8" y="16" textAnchor="middle" fontSize="13" fontWeight="700" fill={color} stroke="none">{letter}</text>
    </Svg>
  );
}

const apps: [string, ReactNode][] = [
  ["Démarrer", <Svg size={17}><path d="M0 4L10 2.500V11H0ZM11.500 2.300L24 0V11H11.500ZM0 12.500H10V21L0 20ZM11.500 12.500H24V24L11.500 21.500Z" fill="#fff" stroke="none" /></Svg>],
  ["Rechercher", <Svg size={23}><circle cx="14" cy="9" r="8" stroke="#fff" strokeWidth="2" /><path d="M8.500 15L1 23" stroke="#fff" strokeWidth="2.500" /></Svg>],
  ["Applications actives", <Svg size={18}><path d="M1 1V4H15V1M1 8H15V16H1ZM1 23V20H15V23M21 1V5M21 12V23" stroke="#fff" strokeWidth="1.800" /><path d="M19 7H23V11H19Z" fill="#fff" stroke="none" /></Svg>],
  ["Téléphone", <Svg size={24}><rect x="1" y="2" width="22" height="15" fill="#1573bd" stroke="none" /><path d="M1 20L4 17H20L23 20Z" fill="#0d5da3" stroke="none" /><rect x="6" y="5" width="12" height="17" rx="1" fill="#20a4ee" stroke="none" /><path d="M10 7H14" stroke="#b5e6ff" /></Svg>],
  ["Spotify", <Svg size={24}><circle cx="12" cy="12" r="11.500" fill="#1ed760" stroke="none" /><path d="M5 8.500Q12 6 19.500 9.500M6 12.500Q12 10.500 18 13.500M7 16Q12 14.500 16.500 17" stroke="#111" strokeWidth="2.200" strokeLinecap="round" /></Svg>],
  ["Imprimante", <Svg size={25}><path d="M3 4H10V9H3ZM12 6H20V10H12Z" fill="#f4f4f4" stroke="#ccc" strokeWidth="1" /><path d="M1 10Q2 8 4 8H21Q24 9 24 12V18L18 20H5L1 18Z" fill="#d7d7d7" stroke="none" /><path d="M5 15H19" stroke="#aaa" strokeWidth="1" /><path d="M6 16H18L19 20H5Z" fill="#f5f5f5" stroke="none" /></Svg>],
  ["Excel", <Doc letter="X" color="#3c8a2e" />],
  ["Word", <Doc letter="W" color="#2a5caa" />],
  ["Explorateur", <Svg size={24}><path d="M1 3H9L11 6H23V21H1Z" fill="#e8a927" stroke="none" /><path d="M1 7H23V21H1Z" fill="#ffd567" stroke="none" /><path d="M5 22V14Q5 12 7 12H17Q19 12 19 14V22H15V17H9V22Z" fill="#3f97dc" stroke="none" /></Svg>],
  ["Calculatrice", <Svg size={24}><rect x="4" y="0" width="17" height="24" rx="1" fill="#6a7680" stroke="none" /><rect x="6" y="2" width="13" height="5" fill="#32c8f4" stroke="none" /><path d="M6 10H14M6 15H14M6 20H14" stroke="#dde3e8" strokeWidth="4" strokeDasharray="3.800 .7" /><path d="M17 8V13" stroke="#dde3e8" strokeWidth="4" /><path d="M17 14V22" stroke="#0a4a88" strokeWidth="4" /></Svg>],
  ["Paint", <Svg size={25}><path d="M2 16Q1 6 11 5Q21 5 20 13Q19 17 15 16Q12 17 13 20Q12 24 7 22Q3 20 2 16Z" fill="#cfe6f4" stroke="#8fb6cf" strokeWidth="1" /><circle cx="6" cy="12" r="2" fill="#e04040" stroke="none" /><circle cx="11" cy="9" r="2" fill="#3fae49" stroke="none" /><circle cx="16" cy="10" r="2" fill="#f2c230" stroke="none" /><circle cx="7" cy="18" r="2" fill="#2f6fd0" stroke="none" /><path d="M15 23L21 6" stroke="#d98b3c" strokeWidth="3" /><path d="M20 7L22 0L24 5Z" fill="#a56a42" stroke="none" /></Svg>],
  ["Courtier", <Svg size={24}><path d="M11 3L2 12L11 21M7 12L12 7" stroke="#123f86" strokeWidth="3" /><path d="M12 1L23 12L12 23V17L17 12L12 7Z" fill="#1b4a92" stroke="none" /></Svg>],
  ["Chrome", <Svg size={24}><circle cx="12" cy="12" r="12" fill="#fbc116" stroke="none" /><path d="M12 12L1.600 6A12 12 0 0 1 22.400 6Z" fill="#e33b2e" stroke="none" /><path d="M12 12L1.600 6A12 12 0 0 0 12 24L17 15Z" fill="#2fa24c" stroke="none" /><path d="M12 6H22.400" stroke="#e33b2e" strokeWidth="1" /><circle cx="12" cy="12" r="6" fill="#fff" stroke="none" /><circle cx="12" cy="12" r="4.500" fill="#3b7ded" stroke="none" /></Svg>],
  ["ProRealTime", <Candles size={24} />],
];

function TaskBar() {
  return (
    <footer className="flex h-[39px] items-stretch bg-[#101010]">
      {apps.map(([name, icon]) => (
        <button
          key={name}
          type="button"
          aria-label={name}
          className={name === "ProRealTime" ? "flex w-[49px] items-center justify-center bg-[#2e2e2e]" : "flex w-[49px] items-center justify-center"}
        >
          {icon}
        </button>
      ))}
      <div className="ml-auto flex flex-col items-center justify-center pr-[6px] font-['Noto_Sans',sans-serif] leading-[18px] text-white">
        <time>18:55</time>
        <time>08/02/2024</time>
      </div>
    </footer>
  );
}

export default function App() {
  return (
    <div className="bg-white font-['Liberation_Sans',Arial,sans-serif] text-[11px] text-[#111]">
      <MenuBar />
      <ToolBar />
      <TitleBar />
      <AccountBar />
      <main className="relative">
        <Indicators />
        <Chart />
      </main>
      <BottomBar />
      <TaskBar />
    </div>
  );
}
